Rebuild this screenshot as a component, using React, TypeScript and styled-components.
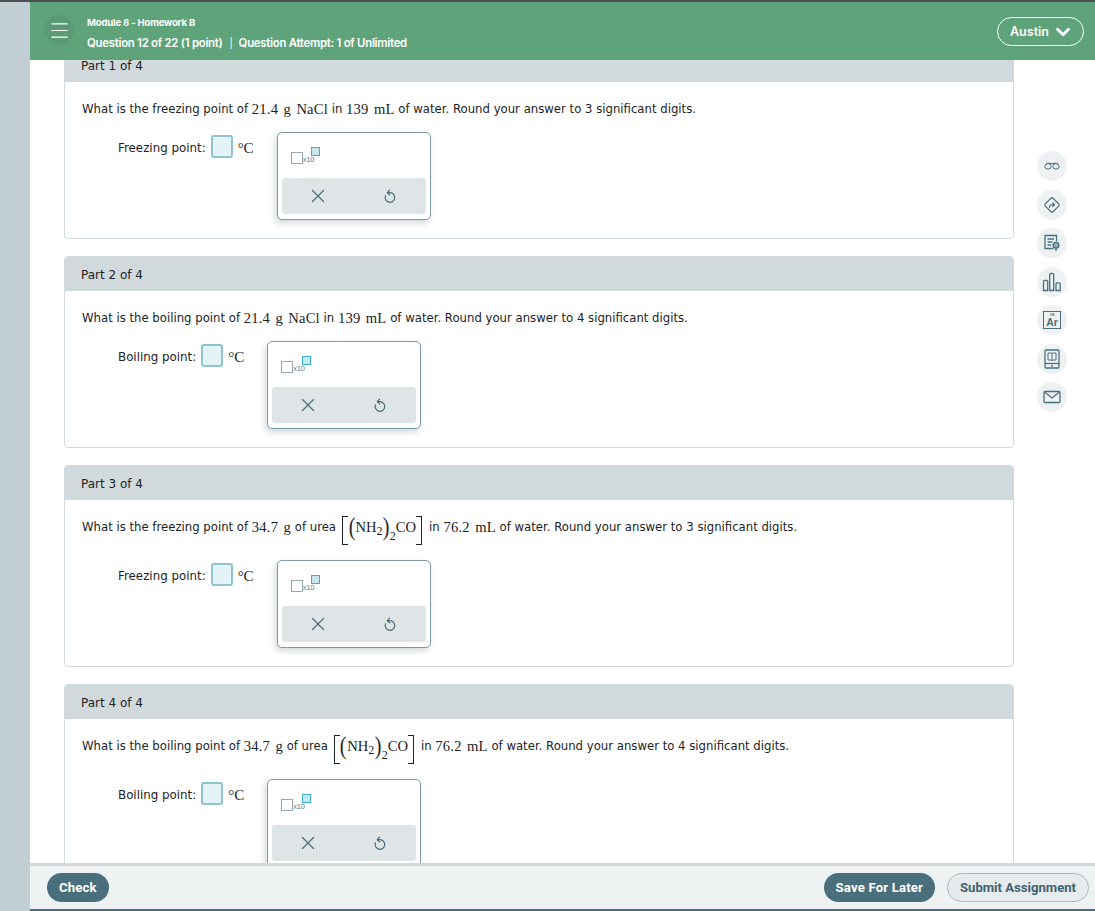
import React from 'react';
import styled, { createGlobalStyle } from 'styled-components';
import { X, Menu, ChevronDown } from 'lucide-react';

const GlobalStyle = createGlobalStyle`
  html, body {
    margin: 0;
    height: 100%;
    overflow: hidden;
    background: #fff;
  }
  * { box-sizing: border-box; }
`;

const Page = styled.div`
  width: 1095px;
  height: 911px;
  display: flex;
  border-top: 2px solid #4a4f52;
  overflow: hidden;
`;

const Rail = styled.div`
  width: 30px;
  flex-shrink: 0;
  background: #c1ced3;
`;

const Main = styled.div`
  flex: 1;
  min-width: 0;
  display: flex;
  flex-direction: column;
`;

const Header = styled.header`
  height: 58px;
  flex-shrink: 0;
  background: #5fa37b;
  display: flex;
  align-items: center;
  padding: 0 11px 0 14px;
  color: #fff;
  font-family: Inter, "Liberation Sans", sans-serif;
  position: relative;
  z-index: 2;
`;

const MenuButton = styled.div`
  width: 30px;
  height: 30px;
  border-radius: 50%;
  background: #5a9b75;
  display: flex;
  align-items: center;
  justify-content: center;
  margin: -2px 13px 0 0;
  color: #fff;
`;

const HeaderText = styled.div`
  flex: 1;
  display: flex;
  flex-direction: column;
  gap: 7px;
  padding-top: 5px;
`;

const ModuleTitle = styled.div`
  font-size: 9.6px;
  line-height: 12px;
  font-weight: 700;
  letter-spacing: -0.2px;
`;

const QuestionInfo = styled.div`
  font-size: 11.4px;
  line-height: 14px;
  font-weight: 600;
  letter-spacing: -0.27px;
`;

const Pipe = styled.span`
  font-weight: 400;
  font-size: 10px;
  margin: 0 6px 0 7px;
`;

const UserButton = styled.div`
  width: 87px;
  height: 29px;
  border: 1px solid #fff;
  border-radius: 15px;
  display: flex;
  align-items: center;
  justify-content: center;
  gap: 3px;
  padding-left: 3px;
  font-size: 12.5px;
  font-weight: 600;
  margin-top: 1px;
`;

const Scroll = styled.div`
  flex: 1;
  min-height: 0;
  overflow: hidden;
  display: flex;
  font-family: "DejaVu Sans", Verdana, sans-serif;
  color: #1c2326;
`;

const Parts = styled.div`
  width: 950px;
  margin-left: 34px;
  flex-shrink: 0;
  display: flex;
  flex-direction: column;
  gap: 17px;
  margin-top: -13px;
`;

const Card = styled.section`
  flex-shrink: 0;
  border: 1px solid #d2dadd;
  border-radius: 4px;
  background: #fff;
  overflow: hidden;
  padding-bottom: 18px;
`;

const CardHead = styled.div`
  height: 35px;
  margin: -1px -1px 0;
  background: #d1d9dc;
  padding: 2px 17px 0;
  display: flex;
  align-items: center;
  font-size: 12px;
`;

const Question = styled.div<{ $tall?: boolean }>`
  height: 24px;
  margin-top: 15px;
  margin-bottom: ${p => (p.$tall ? 21 : 11)}px;
  padding-left: 17px;
  display: flex;
  align-items: center;
  white-space: pre;
  font-size: 11.7px;
`;

const Mth = styled.span`
  font-family: "Liberation Serif", "Times New Roman", serif;
  font-size: 14.6px;
  word-spacing: 1.5px;
  letter-spacing: 0.2px;
`;

const Formula = styled.span`
  display: inline-flex;
  align-items: center;
  font-family: "Liberation Serif", "Times New Roman", serif;
  font-size: 14.6px;
  margin: 0 5px 0 4px;
`;

const Bracket = styled.span<{ $side: 'l' | 'r' }>`
  width: 6px;
  height: 29px;
  border: 1.2px solid #1c2326;
  ${p => (p.$side === 'l' ? 'border-right: none; margin: 7px 0 0 2px;' : 'border-left: none; margin: 7px 2px 0 0;')}
`;

const Paren = styled.span`
  font-size: 25px;
  line-height: 24px;
  font-weight: 300;
  transform: scaleX(0.8);
  margin: 0 -0.5px;
`;

const Sub = styled.span<{ $low?: boolean }>`
  font-size: 12px;
  position: relative;
  top: ${p => (p.$low ? 9 : 4)}px;
`;

const AnswerRow = styled.div`
  display: flex;
  align-items: flex-start;
  padding-left: 53px;
`;

const Label = styled.span`
  font-size: 11.85px;
  line-height: 16px;
  margin-top: 8px;
  margin-right: 5px;
`;

const Input = styled.div`
  width: 22px;
  height: 23px;
  margin-top: 3px;
  border: 2px solid #8ec3cf;
  border-radius: 3px;
  background: #e4f3f8;
`;

const Unit = styled.span`
  font-family: "Liberation Serif", "Times New Roman", serif;
  font-size: 15px;
  line-height: 16px;
  margin: 8px 0 0 5px;
`;

const Palette = styled.div`
  width: 154px;
  height: 88px;
  margin-left: 23px;
  border: 1px solid #7f9aa3;
  border-radius: 5px;
  background: #fff;
  box-shadow: -2px 3px 6px rgba(90, 120, 130, 0.28);
  padding: 0 4px 5px;
  display: flex;
  flex-direction: column;
  justify-content: space-between;
`;

const TemplateRow = styled.div`
  height: 44px;
  display: flex;
  align-items: flex-end;
  padding: 0 0 13px 9px;
`;

const BaseBox = styled.div`
  width: 12px;
  height: 12px;
  border: 1.5px solid #98a8ae;
`;

const Times = styled.span`
  font-family: "Liberation Sans", Arial, sans-serif;
  font-size: 7.5px;
  line-height: 8px;
  letter-spacing: -0.2px;
  color: #5f7884;
`;

const ExpBox = styled.div`
  width: 9px;
  height: 9px;
  margin: 0 0 8px -3px;
  border: 1.5px solid #3cb0c4;
  background: #c5e8ee;
`;

const PaletteActions = styled.div`
  height: 36px;
  border-radius: 3px;
  background: #dfe5e7;
  display: flex;
  align-items: center;
  color: #4a6d7a;
`;

const PaletteAction = styled.div`
  flex: 1;
  display: flex;
  justify-content: center;
`;

const Tools = styled.aside`
  display: flex;
  flex-direction: column;
  gap: 8.5px;
  margin: 91px 0 0 23px;
`;

const Tool = styled.div`
  width: 30px;
  height: 30px;
  border-radius: 50%;
  background: #edf1f2;
  display: flex;
  align-items: center;
  justify-content: center;
`;

const Footer = styled.footer`
  height: 48px;
  flex-shrink: 0;
  position: relative;
  z-index: 2;
  background: #eef2f3;
  border-top: 3px solid #d1d9dc;
  border-bottom: 2px solid #4a6f7c;
  display: flex;
  align-items: center;
  padding: 0 6px 0 17px;
  font-family: Roboto, "Liberation Sans", sans-serif;
  font-size: 13.2px;
  font-weight: 700;
`;

const Solid = styled.div`
  height: 29px;
  padding: 0 12px;
  border-radius: 15px;
  background: #4a6f7c;
  color: #fff;
  letter-spacing: 0.15px;
  display: flex;
  align-items: center;
`;

const Outline = styled.div`
  height: 29px;
  margin-left: 12px;
  padding: 0 12px;
  border: 1px solid #a9b9bf;
  border-radius: 15px;
  background: #e6ebed;
  color: #3f6271;
  font-size: 13.1px;
  display: flex;
  align-items: center;
`;

const Spacer = styled.div`
  flex: 1;
`;

const ink = '#4a6f7c';

function Glasses() {
  return (
    <svg width="16" height="10" viewBox="0 0 16 10" fill="none" stroke={ink} strokeWidth="1">
      <ellipse cx="4" cy="5.4" rx="3.2" ry="2.8" />
      <ellipse cx="12" cy="5.4" rx="3.2" ry="2.8" />
      <path d="M2 3.2C3 2 5 1.8 8 2.8c3-1 5-.8 6 .4" />
    </svg>
  );
}

function Direction() {
  return (
    <svg width="20" height="20" viewBox="0 0 20 20" fill="none" stroke={ink} strokeWidth="1.2" strokeLinejoin="round">
      <rect x="4.5" y="4.5" width="11" height="11" rx="1.5" transform="rotate(45 10 10)" />
      <path d="M7.6 12.4v-.9c0-1 .7-1.7 1.7-1.7h3M10.8 8l1.8 1.8-1.8 1.8" strokeLinecap="round" />
    </svg>
  );
}

function Report() {
  return (
    <svg width="18" height="20" viewBox="0 0 18 20" fill="none" stroke={ink} strokeWidth="1.3">
      <path d="M10.5 15.5H2V2.5h11.5v6" />
      <path d="M4.5 6h6.5M4.5 9h5M4.5 12h3.5" />
      <circle cx="13" cy="12.3" r="2.9" fill="#8fadb7" />
      <path d="M12 16.3h2M12.5 17.8h1" />
    </svg>
  );
}

function Bars() {
  return (
    <svg width="20" height="20" viewBox="0 0 20 20" fill="none" stroke={ink} strokeWidth="1.3">
      <path d="M1.500 18.500V9.500a1.200 1.200 0 0 1 1.200-1.200h1.800a1.200 1.200 0 0 1 1.200 1.200v9z" />
      <path d="M7.700 18.500V2.700a1.200 1.200 0 0 1 1.200-1.200h1.600a1.200 1.200 0 0 1 1.200 1.200v15.800z" />
      <path d="M14 18.500V12a1.200 1.200 0 0 1 1.200-1.200h1.800a1.200 1.200 0 0 1 1.200 1.200v6.500z" />
    </svg>
  );
}

const ElementBox = styled.div`
  width: 18px;
  height: 18px;
  border: 1.4px solid ${ink};
  color: ${ink};
  font-family: "Liberation Sans", Arial, sans-serif;
  font-weight: 700;
  font-size: 10.5px;
  line-height: 10px;
  text-align: center;
  padding-top: 1px;
  &::before {
    content: '18';
    display: block;
    font-size: 4px;
    line-height: 4px;
  }
`;

function Book() {
  return (
    <svg width="16" height="20" viewBox="0 0 16 20" fill="none" stroke={ink} strokeWidth="1.3">
      <rect x="1" y="1" width="14" height="18" rx="1.2" />
      <path d="M1 14.500h14" />
      <path d="M4 4h3.200c.5 0 .8.3.8.8 0-.5.3-.8.8-.8H12v7H9c-.6 0-1 .2-1 .8 0-.6-.4-.8-1-.8H4zM8 5v6.500" strokeWidth="1" />
      <path d="M7 16.800h2" />
    </svg>
  );
}

function Mail() {
  return (
    <svg width="18" height="14" viewBox="0 0 18 14" fill="none" stroke={ink} strokeWidth="1.3">
      <rect x="1" y="1.500" width="16" height="11" rx="1" />
      <path d="M1.500 2l7.500 6 7.500-6" />
    </svg>
  );
}

function Undo() {
  return (
    <svg width="14" height="16" viewBox="0 0 14 16" fill="none" stroke="#4a6d7a" strokeWidth="1.2" strokeLinecap="round" strokeLinejoin="round">
      <path d="M4.500 4.700H7a4.800 4.800 0 1 1-4.600 3.200" />
      <path d="M6.600 2.200L4.300 4.700 6.600 6.800" />
    </svg>
  );
}

function Urea() {
  return (
    <Formula>
      <Bracket $side="l" />
      <Paren>(</Paren>
      NH<Sub>2</Sub>
      <Paren>)</Paren>
      <Sub $low>2</Sub>
      CO
      <Bracket $side="r" />
    </Formula>
  );
}

type PartData = {
  n: number;
  label: string;
  tall?: boolean;
  question: React.ReactNode;
};

const parts: PartData[] = [
  {
    n: 1,
    label: 'Freezing point:',
    question: (
      <>
        What is the freezing point of <Mth>21.4 g NaCl</Mth> in <Mth>139 mL</Mth> of water. Round your answer to 3 significant digits.
      </>
    ),
  },
  {
    n: 2,
    label: 'Boiling point:',
    question: (
      <>
        What is the boiling point of <Mth>21.4 g NaCl</Mth> in <Mth>139 mL</Mth> of water. Round your answer to 4 significant digits.
      </>
    ),
  },
  {
    n: 3,
    label: 'Freezing point:',
    tall: true,
    question: (
      <>
        What is the freezing point of <Mth>34.7 g</Mth> of urea<Urea />in <Mth>76.2 mL</Mth> of water. Round your answer to 3 significant digits.
      </>
    ),
  },
  {
    n: 4,
    label: 'Boiling point:',
    tall: true,
    question: (
      <>
        What is the boiling point of <Mth>34.7 g</Mth> of urea<Urea />in <Mth>76.2 mL</Mth> of water. Round your answer to 4 significant digits.
      </>
    ),
  },
];

export default function App() {
  return (
    <Page>
      <GlobalStyle />
      <Rail />
      <Main>
        <Header>
          <MenuButton>
            <Menu size={23} strokeWidth={1.3} />
          </MenuButton>
          <HeaderText>
            <ModuleTitle>Module 8 - Homework B</ModuleTitle>
            <QuestionInfo>Question 12 of 22 (1 point)<Pipe>|</Pipe>Question Attempt: 1 of Unlimited</QuestionInfo>
          </HeaderText>
          <UserButton>
            Austin
            <ChevronDown size={22} strokeWidth={3} />
          </UserButton>
        </Header>
        <Scroll>
          <Parts>
            {parts.map(part => (
              <Card key={part.n}>
                <CardHead>Part {part.n} of 4</CardHead>
                <Question $tall={part.tall}>{part.question}</Question>
                <AnswerRow>
                  <Label>{part.label}</Label>
                  <Input />
                  <Unit>°C</Unit>
                  <Palette>
                    <TemplateRow>
                      <BaseBox />
                      <Times>x10</Times>
                      <ExpBox />
                    </TemplateRow>
                    <PaletteActions>
                      <PaletteAction>
                        <X size={22} strokeWidth={1.3} />
                      </PaletteAction>
                      <PaletteAction>
                        <Undo />
                      </PaletteAction>
                    </PaletteActions>
                  </Palette>
                </AnswerRow>
              </Card>
            ))}
          </Parts>
          <Tools>
            <Tool><Glasses /></Tool>
            <Tool><Direction /></Tool>
            <Tool><Report /></Tool>
            <Tool><Bars /></Tool>
            <Tool><ElementBox>Ar</ElementBox></Tool>
            <Tool><Book /></Tool>
            <Tool><Mail /></Tool>
          </Tools>
        </Scroll>
        <Footer>
          <Solid>Check</Solid>
          <Spacer />
          <Solid>Save For Later</Solid>
          <Outline>Submit Assignment</Outline>
        </Footer>
      </Main>
    </Page>
  );
}
